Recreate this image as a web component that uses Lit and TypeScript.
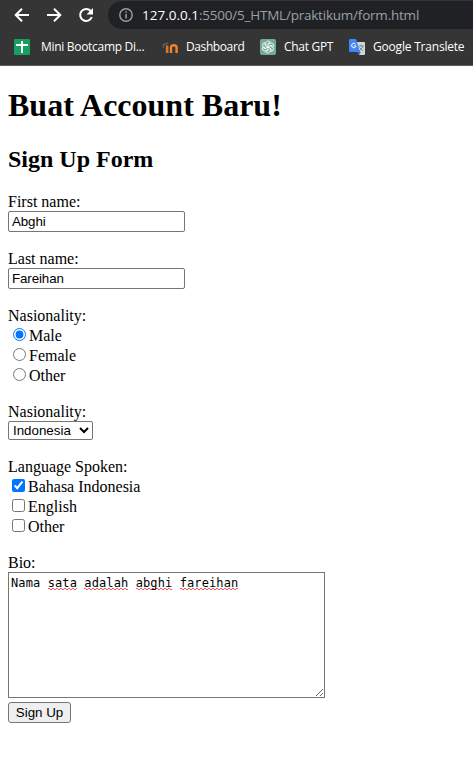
import { LitElement, html, css, svg } from "lit";
import { customElement } from "lit/decorators.js";

@customElement("browser-bar")
class BrowserBar extends LitElement {
  static styles = css`
    :host { display: block; height: 65px; background: #353535; border-bottom: 1px solid #5c5c5c; color: #fff; overflow: hidden; font-family: "Open Sans", "Noto Sans", sans-serif; }
    .nav { display: flex; height: 29px; align-items: flex-start; }
    .buttons { display: flex; gap: 16px; padding: 7px 14px 0 14px; }
    svg { display: block; flex: none; }
    .address { flex: 1; height: 28px; margin-top: 1px; background: #202124; border-radius: 14px 0 0 14px; display: flex; align-items: center; padding-left: 11px; font-size: 13.5px; white-space: nowrap; line-height: 28px; }
    .url { margin-left: 9px; color: #9aa0a6; letter-spacing: -.22px; }
    .host { color: #fff; letter-spacing: 0; }
    .marks { display: flex; height: 36px; align-items: center; padding-left: 14px; font-size: 12px; letter-spacing: -.3px; white-space: nowrap; }
    .mark { display: flex; align-items: center; }
    .mark span { line-height: 18px; margin-left: 8px; }
    .mark .t1 { margin-left: 11px; width: 121px; }
    .mark .t2 { width: 74px; letter-spacing: -.4px; }
    .mark .t3 { width: 65px; }
    .mark .t4 { letter-spacing: -.2px; }
  `;
  render() {
    return html`
      <div class="nav">
        <div class="buttons">
          <svg width="16" height="16" viewBox="0 0 16 16" fill="none" stroke="#fff" stroke-width="2"><path d="M15 8H2M8 1.7 1.7 8 8 14.3"/></svg>
          <svg width="16" height="16" viewBox="0 0 16 16" fill="none" stroke="#fff" stroke-width="2"><path d="M1 8h13M8 1.7 14.3 8 8 14.3"/></svg>
          <svg width="16" height="16" viewBox="0 0 16 16"><path d="M12.7 4A6 6 0 1 0 13.8 10" fill="none" stroke="#fff" stroke-width="2"/><path d="M15 1v6.5H8.5z" fill="#fff"/></svg>
        </div>
        <div class="address">
          <svg width="14" height="14" viewBox="0 0 14 14"><circle cx="7" cy="7" r="6.2" fill="none" stroke="#9aa0a6" stroke-width="1.4"/><path d="M6.3 6h1.5v4.5H6.3zM6.3 3.3h1.5v1.5H6.3z" fill="#9aa0a6"/></svg>
          <span class="url"><span class="host">127.0.0.1</span>:5500/5_HTML/praktikum/form.html</span>
        </div>
      </div>
      <div class="marks">
        <div class="mark">
          <svg width="16" height="16" viewBox="0 0 16 16"><rect width="16" height="16" rx="1" fill="#16a05d"/><path d="M7 2h2v12H7zM2 5h12v2H2z" fill="#fff"/></svg><span class="t1">Mini Bootcamp Di...</span>
        </div>
        <div class="mark">
          <svg width="16" height="16" viewBox="0 0 16 16"><path d="M0 5.5 6 3.2l.5 1.6L2 6.5V9H.8V6.2z" fill="#6c5a50"/><path d="M3.8 6.5h2.6V14H3.8z" fill="#d8782a"/><path d="M9 14V8.6q0-2.4 2.8-2.4t2.8 2.4V14" stroke="#f0842a" stroke-width="2.4" fill="none"/></svg><span class="t2">Dashboard</span>
        </div>
        <div class="mark">
          <svg width="16" height="16" viewBox="0 0 16 16"><rect width="16" height="16" rx="2" fill="#74aa9c"/><g fill="none" stroke="#fff" stroke-width=".8">${[0, 60, 120, 180, 240, 300].map(a => svg`<path transform="rotate(${a} 8 8)" d="M5.8 6.8V4.3a2.5 2.5 0 0 1 4.6-1.1L7.9 4.7v4"/>`)}</g></svg><span class="t3">Chat GPT</span>
        </div>
        <div class="mark">
          <svg width="16" height="16" viewBox="0 0 16 16"><path d="M6 3h9q1 0 1 1v11q0 1-1 1h-5z" fill="#d5d5d5"/><path d="M8 13h4l-2 3z" fill="#3367d6"/><path d="M1 0h6l4 13H1q-1 0-1-1V1q0-1 1-1z" fill="#4285f4"/><path d="M6.6 5.2A2.2 2.2 0 1 0 7 7H4.8" stroke="#fff" fill="none"/><path d="M9.5 7H15M12 5.5V7M14 7q-1 3-4 5M10.5 8.5 14 12" stroke="#607d8b" stroke-width=".8" fill="none"/></svg><span class="t4">Google Translete</span>
        </div>
      </div>`;
  }
}

@customElement("app-root")
class AppRoot extends LitElement {
  static styles = css`
    :host { display: block; height: 779px; background: #fff; color: #000; font: 16px/19px "Liberation Serif", serif; overflow: hidden; }
    form { display: flex; flex-direction: column; align-items: flex-start; padding-left: 8px; }
    h1 { font-size: 32px; line-height: 37px; margin: 21px 0 0; }
    h2 { font-size: 24px; line-height: 27px; margin: 22px 0 20px; }
    .label { height: 18px; line-height: 18px; white-space: nowrap; }
    .group { display: flex; flex-direction: column; align-items: flex-start; }
    input, select, button { box-sizing: border-box; font: 13.333px "Liberation Sans", sans-serif; color: #000; }
    .text { width: 177px; height: 21px; padding: 1px 2px 1px 3px; border: 1px solid #767676; border-radius: 2px; margin: 0 0 18px; outline: 0; letter-spacing: -.1px; }
    .row { display: flex; align-items: center; height: 20px; line-height: 20px; }
    .row input { width: 13px; height: 13px; flex: none; }
    .row span { margin-top: 2px; }
    .radio input { margin: -2px 3px 0 5px; }
    .check input { margin: -2px 3px 0 4px; }
    select { width: 85px; height: 19px; border: 1px solid #767676; border-radius: 2px; background: #fff; padding: 0; margin: 0; }
    .bio { box-sizing: border-box; width: 317px; height: 126px; border: 1px solid #767676; padding: 3px 2px 2px; font: 12px/15px "DejaVu Sans Mono", monospace; letter-spacing: .106px; resize: both; overflow: auto; white-space: pre-wrap; }
    .typo {
      background-image: linear-gradient(90deg, #f55 2px, transparent 2px), linear-gradient(90deg, transparent 2px, #f55 2px);
      background-size: 4px 1px;
      background-repeat: repeat-x;
      background-position: 0 calc(100% - 1px), 0 100%;
    }
    button { width: 63px; height: 21px; margin: 4px 0 0; padding: 0; border: 1px solid #767676; border-radius: 3px; background: #efefef; }
    .g1, .g2, .g3 { padding-bottom: 18px; }
  `;
  render() {
    return html`
      <browser-bar></browser-bar>
      <form @submit=${(e: Event) => e.preventDefault()}>
        <h1>Buat Account Baru!</h1>
        <h2>Sign Up Form</h2>
        <label class="label">First name:</label>
        <input class="text" spellcheck="false" .value=${"Abghi"}>
        <label class="label">Last name:</label>
        <input class="text" spellcheck="false" .value=${"Fareihan"}>
        <div class="group g1"><div class="label">Nasionality:</div>
          ${["Male", "Female", "Other"].map((t, i) => html`<label class="row radio"><input type="radio" name="gender" .checked=${i === 0}><span>${t}</span></label>`)}
        </div>
        <div class="group g2"><div class="label">Nasionality:</div>
          <select><option>Indonesia</option></select>
        </div>
        <div class="group g3"><div class="label">Language Spoken:</div>
          ${["Bahasa Indonesia", "English", "Other"].map((t, i) => html`<label class="row check"><input type="checkbox" .checked=${i === 0}><span>${t}</span></label>`)}
        </div>
        <div class="label">Bio:</div>
        <div class="bio" role="textbox" aria-multiline="true">Nama ${["sata", "adalah", "abghi", "fareihan"].map(w => html`<span class="typo">${w}</span> `)}</div>
        <button>Sign Up</button>
      </form>`;
  }
}
